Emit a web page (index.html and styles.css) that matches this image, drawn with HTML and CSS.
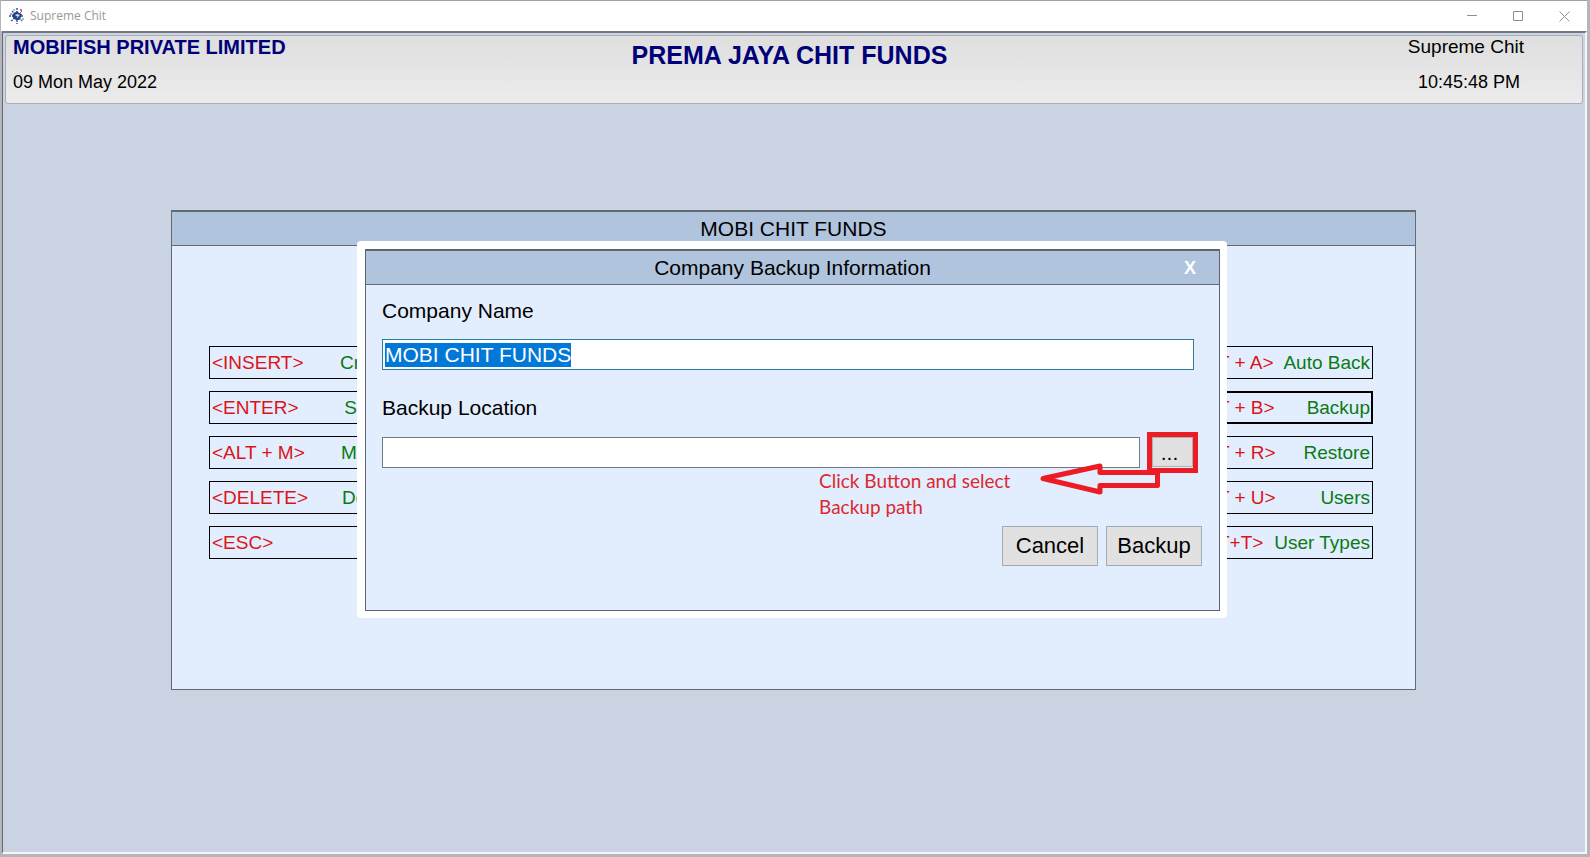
FILE: index.html
```
<!DOCTYPE html>
<html lang="en">
<head>
  <meta charset="UTF-8">
  <title>Supreme Chit</title>
  <link rel="stylesheet" href="styles.css">
</head>
<body>
  <div class="window">
    <div class="titlebar">
      <svg class="app-icon" width="16" height="16" viewBox="0 0 16 16">
        <g stroke="#3c5a96" stroke-width="1.500">
          <path d="M8 0v4M8 12v4M0 8h4M12 8h3M3 3l3 3M10 10l3 3M2 13l4-3" stroke-dasharray="2 1"/>
        </g>
        <path d="M10 6l3-3" stroke="#c2337a" stroke-width="1"/>
        <path d="M8 3l2 2 3 1-1 3-2 3-3 0-3-2-1-3 2-2z" fill="#27427f"/>
        <path d="M6 7l2-1 3 1-2 2z" fill="#c5d8f4"/>
        <path d="M8 9l1 1" stroke="#8fb0e0"/>
        <circle cx="12" cy="2" r="1" fill="#c2337a"/>
        <circle cx="5" cy="2" r="1" fill="#8fc4c9"/>
        <circle cx="2" cy="6" r="1" fill="#7a9a5a"/>
        <circle cx="14" cy="11" r="1" fill="#8a9ad0"/>
      </svg>
      <span class="app-name">Supreme Chit</span>
      <div class="window-controls">
        <button type="button" aria-label="Minimize">
          <svg width="11" height="11" viewBox="0 0 11 11"><path d="M0 4.500h10"/></svg>
        </button>
        <button type="button" aria-label="Maximize">
          <svg width="11" height="11" viewBox="0 0 11 11"><path d="M.5 .5h9v9h-9z"/></svg>
        </button>
        <button type="button" aria-label="Close">
          <svg width="11" height="11" viewBox="0 0 11 11"><path d="M.5 .5l10 10M10.500 .5l-10 10"/></svg>
        </button>
      </div>
    </div>

    <div class="client">
      <header class="header">
        <div class="header-left">
          <div class="vendor">MOBIFISH PRIVATE LIMITED</div>
          <div class="date">09 Mon May 2022</div>
        </div>
        <h1>PREMA JAYA CHIT FUNDS</h1>
        <div class="header-right">
          <div class="product">Supreme Chit</div>
          <div class="time">10:45:48 PM</div>
        </div>
      </header>

      <main class="panel">
        <h2 class="panel-title">MOBI CHIT FUNDS</h2>
        <div class="menus">
          <div class="menu">
            <button type="button"><span class="key">&lt;INSERT&gt;</span><span>Create</span></button>
            <button type="button"><span class="key">&lt;ENTER&gt;</span><span>Select</span></button>
            <button type="button"><span class="key">&lt;ALT + M&gt;</span><span>Modify</span></button>
            <button type="button"><span class="key">&lt;DELETE&gt;</span><span>Delete</span></button>
            <button type="button"><span class="key">&lt;ESC&gt;</span><span>Exit</span></button>
          </div>
          <div class="menu">
            <button type="button"><span class="key">&lt;ALT + A&gt;</span><span>Auto Back</span></button>
            <button type="button" class="active"><span class="key">&lt;ALT + B&gt;</span><span>Backup</span></button>
            <button type="button"><span class="key">&lt;ALT + R&gt;</span><span>Restore</span></button>
            <button type="button"><span class="key">&lt;ALT + U&gt;</span><span>Users</span></button>
            <button type="button"><span class="key">&lt;ALT+T&gt;</span><span>User Types</span></button>
          </div>
        </div>

        <div class="modal" role="dialog" aria-labelledby="modalTitle">
          <div class="modal-inner">
            <div class="modal-header">
              <h2 class="panel-title" id="modalTitle">Company Backup Information</h2>
              <button type="button" class="modal-close" aria-label="Close dialog">X</button>
            </div>
            <form class="modal-form" id="backupForm">
              <label for="company">Company Name</label>
              <input type="text" id="company" class="company" value="MOBI CHIT FUNDS">
              <label for="location">Backup Location</label>
              <div class="location-row">
                <input type="text" id="location">
                <div class="browse">
                  <button type="button" aria-label="Browse">...</button>
                  <div class="callout">
                    <p>Click Button and select<br>Backup path</p>
                    <svg width="120" height="32" viewBox="0 0 120 32">
                      <path d="M3 15.500L60 3v6.500h57.500v13H60V29z" fill="none" stroke="#ec1c24" stroke-width="5" stroke-linejoin="round"/>
                    </svg>
                  </div>
                </div>
              </div>
              <div class="actions">
                <button type="button">Cancel</button>
                <button type="submit">Backup</button>
              </div>
            </form>
          </div>
        </div>
      </main>
    </div>
  </div>

  <script>
    const company = document.getElementById("company");
    company.focus();
    company.select();

    document.getElementById("backupForm").onsubmit = e => e.preventDefault();
  </script>
</body>
</html>
```
FILE: styles.css
```
* {
  box-sizing: border-box;
}

body {
  margin: 0;
  background: #b4b6ba;
  color: #000;
  font-family: "Liberation Sans", Arial, sans-serif;
  font-size: 21px;
  line-height: 24px;
}

h1, h2, p {
  margin: 0;
}

button, input {
  font: inherit;
  color: inherit;
  border-radius: 0;
}

.window {
  display: flex;
  flex-direction: column;
  min-height: calc(100vh - 3px);
  margin: 0 3px 3px 1px;
  border-top: 1px solid #a3a3a3;
}

/* title bar */
.titlebar {
  display: flex;
  align-items: center;
  height: 30px;
  padding-left: 8px;
  background: #fff;
}

.app-icon {
  margin-right: 5px;
}

.app-name {
  color: #999;
  font-family: "Open Sans", "Noto Sans", sans-serif;
  font-size: 12px;
  line-height: 16px;
}

.window-controls {
  display: flex;
  margin-left: auto;
}

.window-controls button {
  display: flex;
  align-items: center;
  justify-content: center;
  width: 46px;
  height: 28px;
  padding: 0;
  border: none;
  background: none;
}

.window-controls path {
  fill: none;
  stroke: #8f8f8f;
}

.client {
  flex: 1;
  margin-left: 1px;
  padding: 2px;
  border: 2px solid #f4f6f9;
  border-top-color: #747885;
  border-left: 1px solid #646874;
  background: #cad3e2;
}

/* header strip */
.header {
  display: grid;
  grid-template-columns: 1fr auto 1fr;
  height: 69px;
  border: 1px solid #abadb3;
  border-radius: 3px;
  background: linear-gradient(#dedede, #ececec);
}

.header-left {
  padding: 0 7px;
}

.vendor, .product {
  margin-bottom: 12px;
  line-height: 22px;
}

.vendor {
  color: #000078;
  font-size: 20px;
  font-weight: bold;
}

.product {
  font-size: 19px;
}

h1 {
  padding: 5px 9px 0 0;
  color: #000078;
  font-size: 25px;
  line-height: 28px;
}

.header-right {
  padding-right: 58px;
  text-align: right;
}

.date, .time {
  font-size: 18px;
}

.time {
  padding-right: 4px;
}

/* company panel */
.panel {
  position: relative;
  margin: 106px 167px 0 166px;
  border: 1px solid #626a74;
  border-top-width: 2px;
  background: #e2eefe;
}

.panel-title {
  height: 34px;
  border-bottom: 1px solid #626a74;
  background: #b0c4de;
  font-size: 21px;
  font-weight: normal;
  line-height: 34px;
  text-align: center;
}

.menus {
  display: flex;
  justify-content: space-between;
  padding: 100px 42px 130px 37px;
}

.menu {
  display: flex;
  flex-direction: column;
  gap: 12px;
  width: 191px;
}

.menu button {
  display: flex;
  align-items: center;
  justify-content: space-between;
  height: 33px;
  padding: 0 2px;
  border: 1px solid #000;
  background: none;
  color: #0b7a14;
  font-size: 19px;
  white-space: nowrap;
}

.menu .active {
  padding: 0 1px;
  border-width: 2px;
}

.key {
  color: #dc1418;
}

/* backup dialog */
.modal {
  position: absolute;
  top: 29px;
  left: 185px;
  right: 188px;
  padding: 8px 7px 7px 8px;
  border-radius: 4px;
  background: #fff;
}

.modal-inner {
  border: 1px solid #5c6470;
  border-top-width: 2px;
  background: #e2eefe;
}

.modal-header {
  position: relative;
}

.modal-close {
  position: absolute;
  top: 5px;
  right: 17px;
  width: 24px;
  height: 24px;
  padding: 0;
  border: none;
  background: none;
  color: #fff;
  font-size: 18px;
  font-weight: bold;
}

.modal-form {
  padding: 14px 17px 44px 16px;
}

.modal-form label {
  display: block;
}

.modal-form input {
  height: 31px;
  padding: 0 2px;
  border: 1px solid #74797f;
  background: #fff;
}

.modal-form input:focus {
  border-color: #2a7d9c;
  outline: none;
}

.modal-form input::selection {
  background: #0078d7;
  color: #fff;
}

.modal-form .company {
  display: block;
  width: calc(100% - 8px);
  margin: 16px 0 26px;
}

.location-row {
  display: flex;
  align-items: center;
  gap: 7px;
  margin: 12px 4px 53px 0;
}

.location-row input {
  flex: 1;
}

/* red marker round the browse button */
.browse {
  position: relative;
  width: 51px;
  height: 41px;
  border: 5px solid #ec1c24;
}

.browse button {
  width: 100%;
  height: 30px;
  padding: 2px 6px 0 0;
  border: 1px solid #adb2b8;
  background: #e1e1e1;
}

.callout {
  position: absolute;
  top: 26px;
  right: 33px;
  display: flex;
  width: 341px;
}

.callout p {
  flex: 1;
  padding-top: 5px;
  color: #dc2830;
  font-family: Lato, sans-serif;
  font-size: 19px;
  line-height: 26px;
  white-space: nowrap;
}

.actions {
  display: flex;
  justify-content: flex-end;
  gap: 8px;
}

.actions button {
  width: 96px;
  height: 40px;
  padding: 0;
  border: 1px solid #a3acb5;
  background: #e1e1e1;
  font-size: 22px;
}
```
